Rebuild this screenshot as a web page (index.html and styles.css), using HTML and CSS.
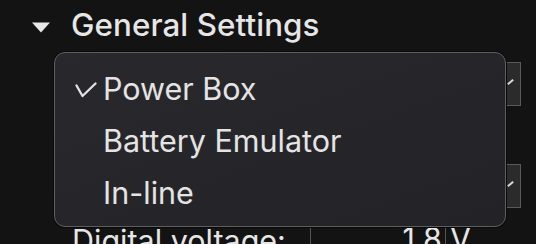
FILE: index.html
```html
<!DOCTYPE html>
<html>
<head>
<meta charset="utf-8">
<link rel="stylesheet" href="styles.css">
</head>
<body>
<div class="page">
  <div class="header">
    <svg class="disclosure" width="20" height="11" viewBox="0 0 20 11"><path d="M1 0.5 L19 0.5 L10 10.5 Z" fill="#e8e8e8"/></svg>
    <span class="title">General Settings</span>
  </div>
  <div class="rows">
    <div class="row first">
      <span class="label">Device type:</span>
      <div class="popup"><span class="chev"></span></div>
    </div>
    <div class="row second">
      <span class="label">Mode:</span>
      <div class="popup"><span class="chev"></span></div>
    </div>
    <div class="row third">
      <span class="label">Digital voltage:</span>
      <div class="field">
        <span class="value">1.8</span>
        <span class="unit">V</span>
      </div>
    </div>
  </div>
  <div class="menu">
    <div class="item checked">
      <svg class="check" width="22" height="16" viewBox="0 0 22 16"><path d="M1.5 3.5 L7.5 14 L20.5 1.5" fill="none" stroke="#e2e2e2" stroke-width="2.3" stroke-linecap="round" stroke-linejoin="round"/></svg>
      <span>Power Box</span>
    </div>
    <div class="item"><span>Battery Emulator</span></div>
    <div class="item"><span>In-line</span></div>
  </div>
</div>
</body>
</html>
```

FILE: styles.css
```css
html, body {
  margin: 0;
  padding: 0;
  background: #131313;
}
body {
  width: 536px;
  height: 244px;
  overflow: hidden;
  font-family: Inter, "Noto Sans", sans-serif;
  color: #e6e6e6;
}
.page {
  position: relative;
  width: 536px;
  height: 244px;
  overflow: hidden;
}
.header {
  display: flex;
  align-items: center;
  gap: 20px;
  height: 50px;
  padding-left: 31px;
  box-sizing: border-box;
}
.disclosure {
  display: block;
  margin-top: 4px;
}
.title {
  font-size: 31.3px;
  font-weight: 500;
  letter-spacing: 0.1px;
}
.rows {
  display: flex;
  flex-direction: column;
  padding: 12px 15px 0 72px;
}
.row {
  display: flex;
  align-items: center;
  justify-content: space-between;
  font-size: 30.5px;
}
.row.second {
  margin-top: 58px;
}
.row.third {
  margin-top: 14px;
  align-items: flex-start;
}
.popup {
  width: 220px;
  height: 44px;
  box-sizing: border-box;
  border: 1.5px solid #5a5a5a;
  background: #2b2b2b;
  position: relative;
}
.chev {
  position: absolute;
  right: 6px;
  top: 18px;
  width: 7px;
  height: 2px;
  background: #d8d8d8;
  transform: rotate(-40deg);
}
.field {
  display: flex;
  width: 210px;
  border-left: 1.5px solid #555;
  height: 40px;
  align-items: flex-start;
}
.value {
  flex: 1;
  text-align: right;
  padding-right: 3px;
  border-right: 1.5px solid #555;
  line-height: 34px;
}
.unit {
  padding-left: 4px;
  width: 71px;
  line-height: 34px;
}
.menu {
  position: absolute;
  left: 54px;
  top: 52px;
  width: 452px;
  height: 175px;
  box-sizing: border-box;
  border: 1.5px solid #5e5e60;
  border-radius: 11px;
  background: linear-gradient(160deg, #29292d 0%, #232327 100%);
  box-shadow: 0 0 0 1px #0a0a0a;
  padding-top: 9px;
  display: flex;
  flex-direction: column;
}
.item {
  display: flex;
  align-items: center;
  height: 52px;
  padding-left: 48px;
  font-size: 30.5px;
  color: #e4e4e4;
  position: relative;
}
.check {
  position: absolute;
  left: 20px;
  top: 20px;
}
```
